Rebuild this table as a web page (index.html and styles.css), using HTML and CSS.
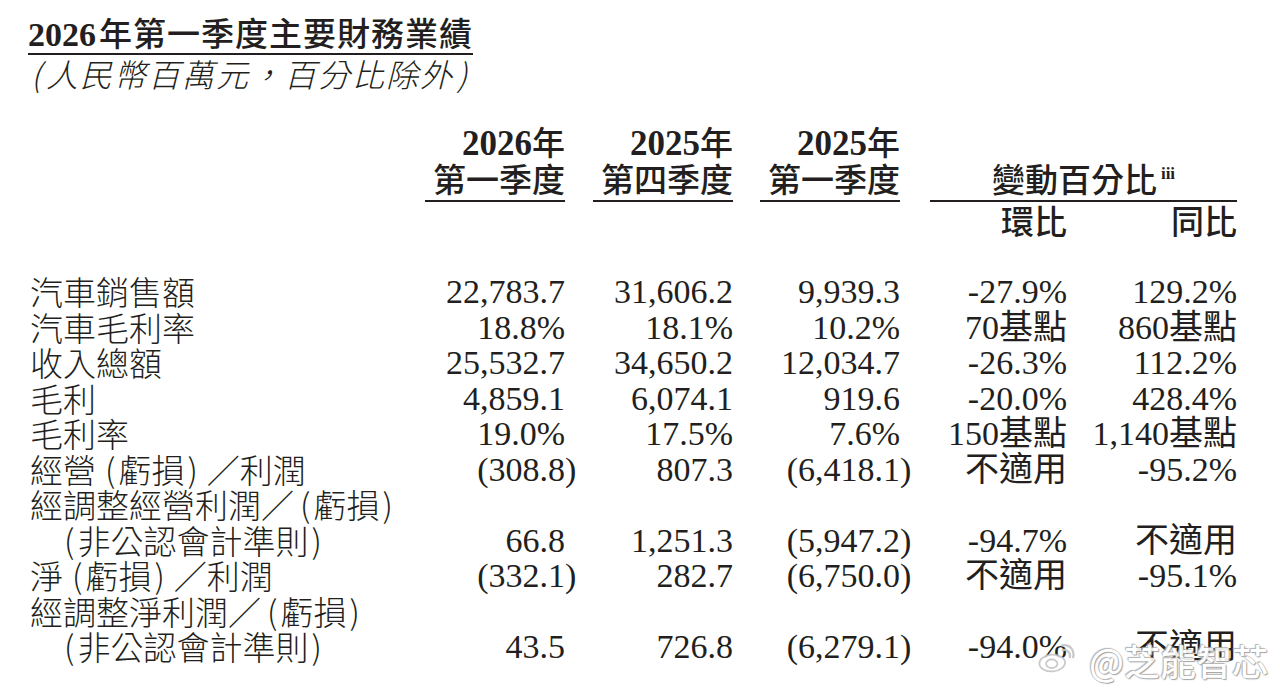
FILE: index.html
```html
<!DOCTYPE html>
<html lang="zh-Hant">
<head>
<meta charset="utf-8">
<title>2026年第一季度主要財務業績</title>
<link rel="stylesheet" href="styles.css">
</head>
<body>
<div class="page">
  <h1 class="title"><span class="title-num">2026</span>年第一季度主要財務業績</h1>
  <p class="subtitle"><span class="sp">(</span>人民幣百萬元，百分比除外<span class="sp">)</span></p>

  <div class="table">
    <div class="hd-blank"></div>
    <div class="hd-col"><div class="hd-inner"><span class="hd-num">2026</span>年<br>第一季度</div></div>
    <div class="hd-col"><div class="hd-inner"><span class="hd-num">2025</span>年<br>第四季度</div></div>
    <div class="hd-col"><div class="hd-inner"><span class="hd-num">2025</span>年<br>第一季度</div></div>
    <div class="hd-change"><div class="hd-change-inner">變動百分比<sup class="note">iii</sup></div></div>

    <div class="sub-blank"></div>
    <div class="sub">環比</div>
    <div class="sub">同比</div>

    <div class="spacer"></div>

    <div class="lbl">汽車銷售額</div>
    <div class="num">22,783.7</div><div class="num">31,606.2</div><div class="num">9,939.3</div><div class="num">-27.9%</div><div class="num">129.2%</div>

    <div class="lbl">汽車毛利率</div>
    <div class="num">18.8%</div><div class="num">18.1%</div><div class="num">10.2%</div><div class="num">70基點</div><div class="num">860基點</div>

    <div class="lbl">收入總額</div>
    <div class="num">25,532.7</div><div class="num">34,650.2</div><div class="num">12,034.7</div><div class="num">-26.3%</div><div class="num">112.2%</div>

    <div class="lbl">毛利</div>
    <div class="num">4,859.1</div><div class="num">6,074.1</div><div class="num">919.6</div><div class="num">-20.0%</div><div class="num">428.4%</div>

    <div class="lbl">毛利率</div>
    <div class="num">19.0%</div><div class="num">17.5%</div><div class="num">7.6%</div><div class="num">150基點</div><div class="num">1,140基點</div>

    <div class="lbl">經營<span class="po">(</span>虧損<span class="pc">)</span>／利潤</div>
    <div class="num">(308.8<span class="cp">)</span></div><div class="num">807.3</div><div class="num">(6,418.1<span class="cp">)</span></div><div class="num">不適用</div><div class="num">-95.2%</div>

    <div class="lbl lbl-full">經調整經營利潤／<span class="po po-tight">(</span>虧損<span class="pc">)</span></div>
    <div class="lbl lbl-indent"><span class="po">(</span>非公認會計準則<span class="pc">)</span></div>
    <div class="num">66.8</div><div class="num">1,251.3</div><div class="num">(5,947.2<span class="cp">)</span></div><div class="num">-94.7%</div><div class="num">不適用</div>

    <div class="lbl">淨<span class="po">(</span>虧損<span class="pc">)</span>／利潤</div>
    <div class="num">(332.1<span class="cp">)</span></div><div class="num">282.7</div><div class="num">(6,750.0<span class="cp">)</span></div><div class="num">不適用</div><div class="num">-95.1%</div>

    <div class="lbl lbl-full">經調整淨利潤／<span class="po po-tight">(</span>虧損<span class="pc">)</span></div>
    <div class="lbl lbl-indent"><span class="po">(</span>非公認會計準則<span class="pc">)</span></div>
    <div class="num">43.5</div><div class="num">726.8</div><div class="num">(6,279.1<span class="cp">)</span></div><div class="num">-94.0%</div><div class="num">不適用</div>
  </div>

  <div class="watermark">
    <svg class="wm-logo" viewBox="0 0 40 36" width="38" height="34" aria-hidden="true">
      <path d="M17 30c-7.5 0.6-14-2.8-14.6-7.6C1.8 17.6 7.6 13 15 12.4c7.5-0.6 14 2.8 14.6 7.6 0.5 4.8-5.2 9.4-12.6 10z" fill="#fff" stroke="#c4c4c4" stroke-width="1.8"/>
      <ellipse cx="15.5" cy="22" rx="6" ry="4.6" fill="#fff" stroke="#c4c4c4" stroke-width="1.8"/>
      <path d="M27 7.5c4.5-1 8.8 2.6 7.6 7.4" fill="none" stroke="#c4c4c4" stroke-width="2.4" stroke-linecap="round"/>
      <path d="M26.6 2.5c7.6-1.6 13.6 5 11.5 12.6" fill="none" stroke="#c4c4c4" stroke-width="2.4" stroke-linecap="round"/>
    </svg>
    <span class="wm-text">@芝能智芯</span>
  </div>
</div>
</body>
</html>
```

FILE: styles.css
```css
html, body {
  margin: 0;
  padding: 0;
  background: #ffffff;
}

body {
  color: #231f20;
  font-family: "Noto Sans CJK TC", "Noto Sans CJK SC", sans-serif;
}

.page {
  position: relative;
  width: 1280px;
  height: 692px;
  overflow: hidden;
  padding: 14px 0 0 28px;
  box-sizing: border-box;
}

.title {
  display: inline-block;
  margin: 0;
  font-size: 33px;
  line-height: 36px;
  font-weight: 500;
  letter-spacing: 1px;
  border-bottom: 2px solid #231f20;
  padding-bottom: 0;
}

.title-num {
  font-family: "Liberation Serif", serif;
  font-weight: 700;
  font-size: 34px;
  letter-spacing: 0;
  margin-right: 3px;
}

.subtitle {
  margin: 0;
  font-size: 32px;
  line-height: 36px;
  font-style: italic;
  font-weight: 300;
  letter-spacing: 2px;
}

.sp {
  display: inline-block;
  padding: 0 3px;
}

.table {
  display: grid;
  grid-template-columns: 395px 140px 168px 167px 167px 170px;
  margin: 33px 0 0 2px;
  font-size: 33px;
}

.hd-blank { grid-column: 1; }

.hd-col {
  display: flex;
  justify-content: flex-end;
}

.hd-inner {
  width: 140px;
  text-align: right;
  line-height: 34px;
  font-weight: 500;
  padding-bottom: 5px;
  border-bottom: 2px solid #231f20;
}

.hd-num {
  font-family: "Liberation Serif", serif;
  font-weight: 700;
  font-size: 35px;
}

.hd-change {
  grid-column: 5 / span 2;
  display: flex;
  align-items: flex-end;
  padding-left: 30px;
}

.hd-change-inner {
  flex: 1;
  text-align: center;
  line-height: 34px;
  font-weight: 500;
  padding-bottom: 5px;
  border-bottom: 2px solid #231f20;
}

.note {
  font-family: "Liberation Serif", serif;
  font-weight: 700;
  font-size: 17px;
  vertical-align: 13px;
  line-height: 0;
  margin-left: 4px;
}

.sub-blank { grid-column: 1 / span 4; }

.sub {
  text-align: right;
  line-height: 34px;
  font-weight: 500;
  padding-top: 1px;
}

.spacer {
  grid-column: 1 / -1;
  height: 37px;
}

.lbl {
  grid-column: 1;
  line-height: 35.5px;
  height: 35.5px;
  font-weight: 300;
  white-space: nowrap;
}

.lbl-full { grid-column: 1 / -1; }

.lbl-indent { padding-left: 34px; }

.po {
  display: inline-block;
  margin: 0 3px 0 9px;
}

.po-tight { margin-left: 6px; }

.pc {
  display: inline-block;
  margin: 0 9px 0 3px;
}

.lbl-indent .po { margin-left: 0; }

.num {
  text-align: right;
  line-height: 35.5px;
  height: 35.5px;
  font-family: "Liberation Serif", "Noto Sans CJK TC", serif;
  font-size: 34px;
  white-space: nowrap;
}

.cp {
  display: inline-block;
  width: 0;
  overflow: visible;
}

.watermark {
  position: absolute;
  right: 12px;
  bottom: 12px;
  display: flex;
  align-items: center;
  gap: 14px;
  opacity: 0.9;
}

.wm-text {
  font-size: 36px;
  line-height: 40px;
  color: #ffffff;
  font-weight: 500;
  text-shadow: 0 0 1px #8f8f8f, 1px 1px 1px #9a9a9a, -1px -1px 1px #b0b0b0;
}
```
